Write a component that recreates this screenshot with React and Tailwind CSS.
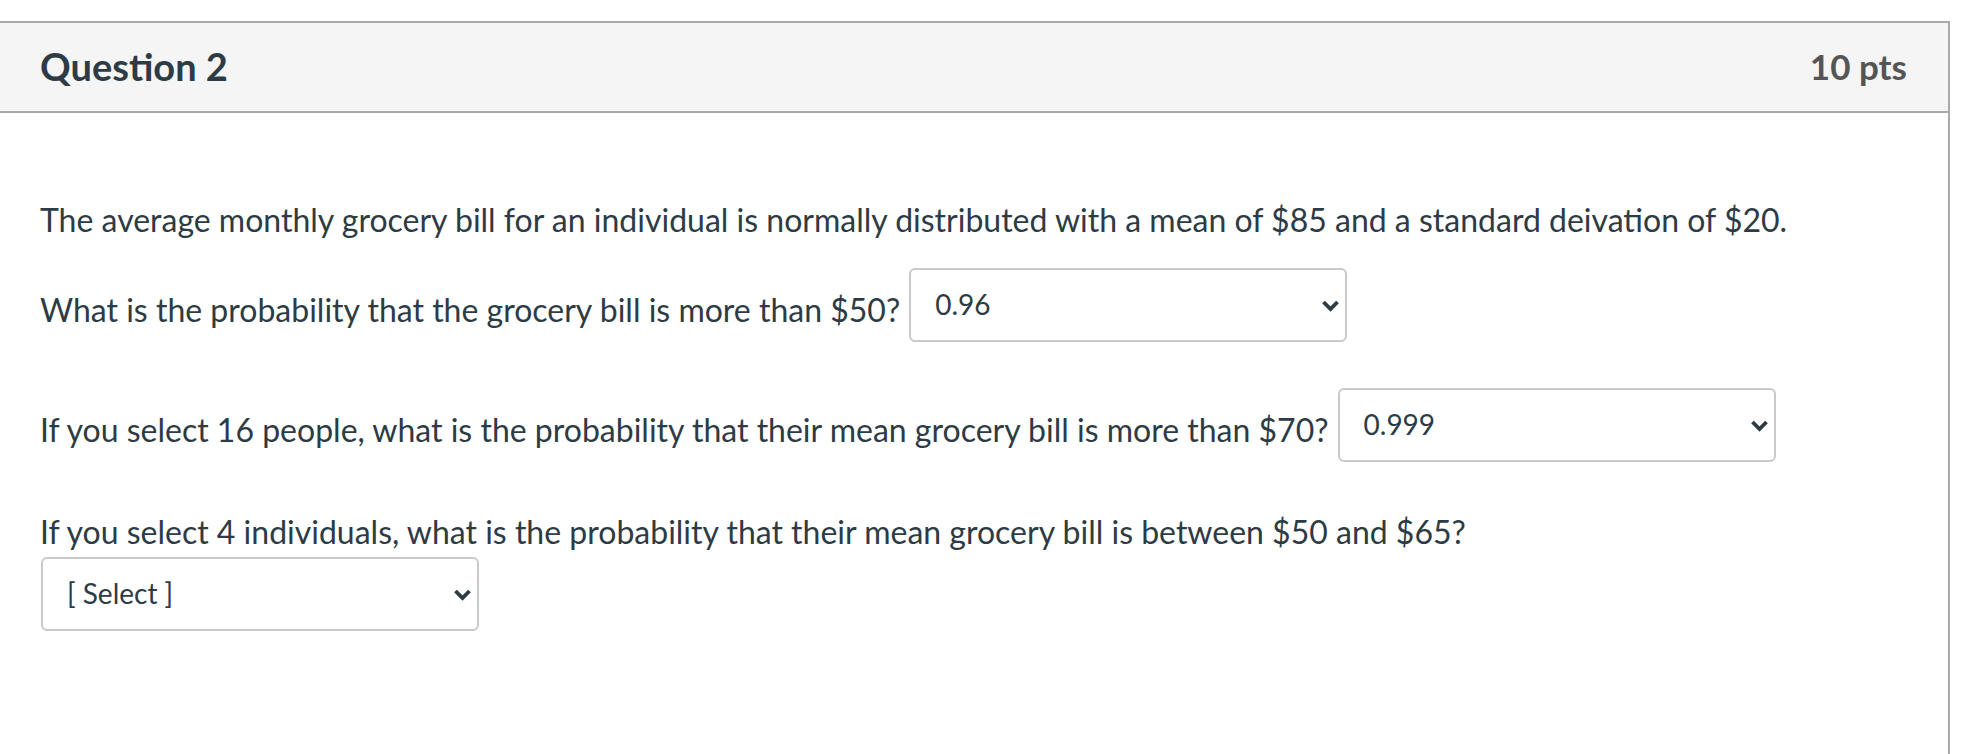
const FONT = { fontFamily: 'Lato, "Open Sans", sans-serif' }

function Chevron() {
  return (
    <svg width="19" height="13" viewBox="0 0 19 13" className="shrink-0">
      <path d="M2.5 3 L9.5 10 L16.5 3" fill="none" stroke="#2d3b45" strokeWidth="3.8" strokeLinecap="butt" strokeLinejoin="miter" />
    </svg>
  )
}

function Dropdown({ value, className = '' }) {
  return (
    <div className={`inline-flex items-center justify-between w-[438px] h-[74px] border-2 border-[#c9c9c9] rounded-[6px] bg-white pl-[24px] pr-[5px] ${className}`}>
      <span className="text-[28px] text-[#2d3b45] leading-none -mt-[2px]">{value}</span>
      <Chevron />
    </div>
  )
}

export default function App() {
  return (
    <div className="w-full h-[754px] bg-white pt-[21px] pr-[12px] overflow-hidden" style={FONT}>
      <div className="border-t-2 border-r-2 border-[#aaaaaa] h-[733px]">
        {/* header */}
        <div className="h-[90px] bg-[#f5f5f5] border-b-2 border-[#aaaaaa] flex items-center justify-between pl-[40px] pr-[41px]">
          <h2 className="text-[38px] font-bold text-[#2d3b45] -mt-[2px]">Question 2</h2>
          <span className="text-[35px] font-bold text-[#555555] -mt-[2px]">10 pts</span>
        </div>

        {/* body */}
        <div className="pl-[40px] pt-[86px] text-[32px] text-[#2d3b45]">
          <p className="leading-[42px]">
            The average monthly grocery bill for an individual is normally distributed with a mean of $85 and a standard deivation of $20.
          </p>

          <div className="flex items-center gap-[9px] mt-[27px]">
            <span className="leading-[42px] mt-[10px]">What is the probability that the grocery bill is more than $50?</span>
            <Dropdown value="0.96" />
          </div>

          <div className="flex items-center gap-[9px] mt-[46px]">
            <span className="leading-[42px] mt-[10px]">If you select 16 people, what is the probability that their mean grocery bill is more than $70?</span>
            <Dropdown value="0.999" />
          </div>

          <p className="leading-[42px] mt-[49px]">
            If you select 4 individuals, what is the probability that their mean grocery bill is between $50 and $65?
          </p>
          <Dropdown value="[ Select ]" className="mt-[4px] ml-px" />
        </div>
      </div>
    </div>
  )
}
